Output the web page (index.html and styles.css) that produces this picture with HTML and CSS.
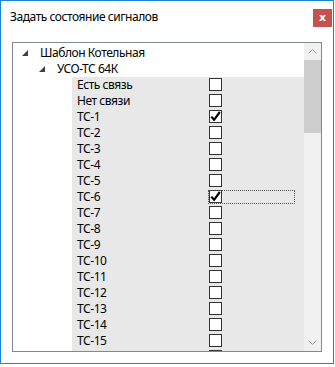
FILE: index.html
```html
<!DOCTYPE html>
<html lang="ru">
<head>
  <meta charset="UTF-8" />
  <title>Задать состояние сигналов</title>
  <link rel="stylesheet" href="styles.css">
</head>
<body>

  <div class="ventana">
    <div class="titulo">
      <span>Задать состояние сигналов</span>
      <button class="cerrar" title="Закрыть">x</button>
    </div>

    <div class="arbol">
      <div class="contenido">
        <div class="nodo nivel0">
          <svg class="flecha" width="6" height="6" viewBox="0 0 6 6"><polygon points="6,0 6,6 0,6"/></svg>
          <span>Шаблон Котельная</span>
        </div>
        <div class="nodo nivel1">
          <svg class="flecha" width="6" height="6" viewBox="0 0 6 6"><polygon points="6,0 6,6 0,6"/></svg>
          <span>УСО-ТС 64К</span>
        </div>

        <div class="senales" id="senales">
          <!-- filas generadas -->
        </div>
      </div>

      <div class="scroll">
        <div class="flecha-scroll">
          <svg width="9" height="5" viewBox="0 0 9 5"><polyline points="0.5,4.5 4.5,0.5 8.5,4.5" fill="none" stroke="#a0a0a0"/></svg>
        </div>
        <div class="pista">
          <div class="barra"></div>
        </div>
        <div class="flecha-scroll">
          <svg width="9" height="5" viewBox="0 0 9 5"><polyline points="0.5,0.5 4.5,4.5 8.5,0.5" fill="none" stroke="#a0a0a0"/></svg>
        </div>
      </div>
    </div>
  </div>

  <script>
    const nombres = ['Есть связь', 'Нет связи'];
    for (let i = 1; i <= 16; i++) nombres.push('ТС-' + i);
    const marcados = ['ТС-1', 'ТС-6'];
    const check = '<svg width="11" height="11" viewBox="0 0 11 11"><path d="M1.3 5.6 L4.1 8.8 L9.8 1" fill="none" stroke="#000" stroke-width="2.2"/></svg>';

    const cont = document.getElementById('senales');
    nombres.forEach(n => {
      const fila = document.createElement('div');
      fila.className = 'fila' + (n === 'ТС-6' ? ' foco' : '');
      fila.innerHTML = `
        <span class="etiqueta">${n}</span>
        <span class="celda"><span class="caja">${marcados.includes(n) ? check : ''}</span></span>
      `;
      cont.appendChild(fila);
    });
  </script>

</body>
</html>
```

FILE: styles.css
```css
body {
  margin: 0;
  background-color: #fff;
  font-family: 'Noto Sans', 'Open Sans', sans-serif;
  font-size: 12px;
  letter-spacing: -0.45px;
  color: #000;
}

.ventana {
  width: 332px;
  height: 362px;
  border: 1px solid #1883d7;
  display: flex;
  flex-direction: column;
  box-sizing: content-box;
}

.titulo {
  height: 41px;
  display: flex;
  align-items: flex-start;
  justify-content: space-between;
  padding-left: 9px;
  box-sizing: border-box;
}

.titulo span {
  margin-top: 8px;
  line-height: 16px;
}

.cerrar {
  width: 19px;
  height: 18px;
  margin-top: 8px;
  margin-right: 1px;
  background-color: #c75050;
  border: none;
  color: #fff;
  font-family: 'DejaVu Sans', sans-serif;
  font-weight: bold;
  font-size: 11px;
  line-height: 14px;
  padding: 0;
}

.arbol {
  margin: 0 11px 11px 11px;
  height: 309px;
  border: 1px solid #828790;
  display: flex;
  overflow: hidden;
}

.contenido {
  flex: 1;
  padding-top: 2px;
  overflow: hidden;
}

.nodo {
  height: 16px;
  display: flex;
  align-items: center;
  line-height: 16px;
}

.flecha {
  fill: #404040;
  margin-right: 12px;
}

.nivel0 {
  padding-left: 9px;
}

.nivel1 {
  padding-left: 26px;
}

.senales {
  margin-left: 59px;
  background-color: #e8e8e8;
}

.fila {
  height: 16px;
  display: flex;
  align-items: center;
}

.etiqueta {
  width: 131px;
  padding-left: 5px;
  line-height: 16px;
}

.celda {
  height: 14px;
  display: flex;
  align-items: center;
  padding-left: 1px;
}

.foco .celda {
  width: 86px;
  outline: 1px dotted #555;
  outline-offset: -1px;
}

.caja {
  width: 11px;
  height: 11px;
  border: 1px solid #333;
  background-color: #fff;
  display: flex;
  align-items: center;
  justify-content: center;
}

.scroll {
  width: 17px;
  background-color: #f0f0f0;
  display: flex;
  flex-direction: column;
}

.flecha-scroll {
  height: 17px;
  display: flex;
  align-items: center;
  justify-content: center;
}

.pista {
  flex: 1;
}

.barra {
  height: 73px;
  background-color: #cdcdcd;
}
```
